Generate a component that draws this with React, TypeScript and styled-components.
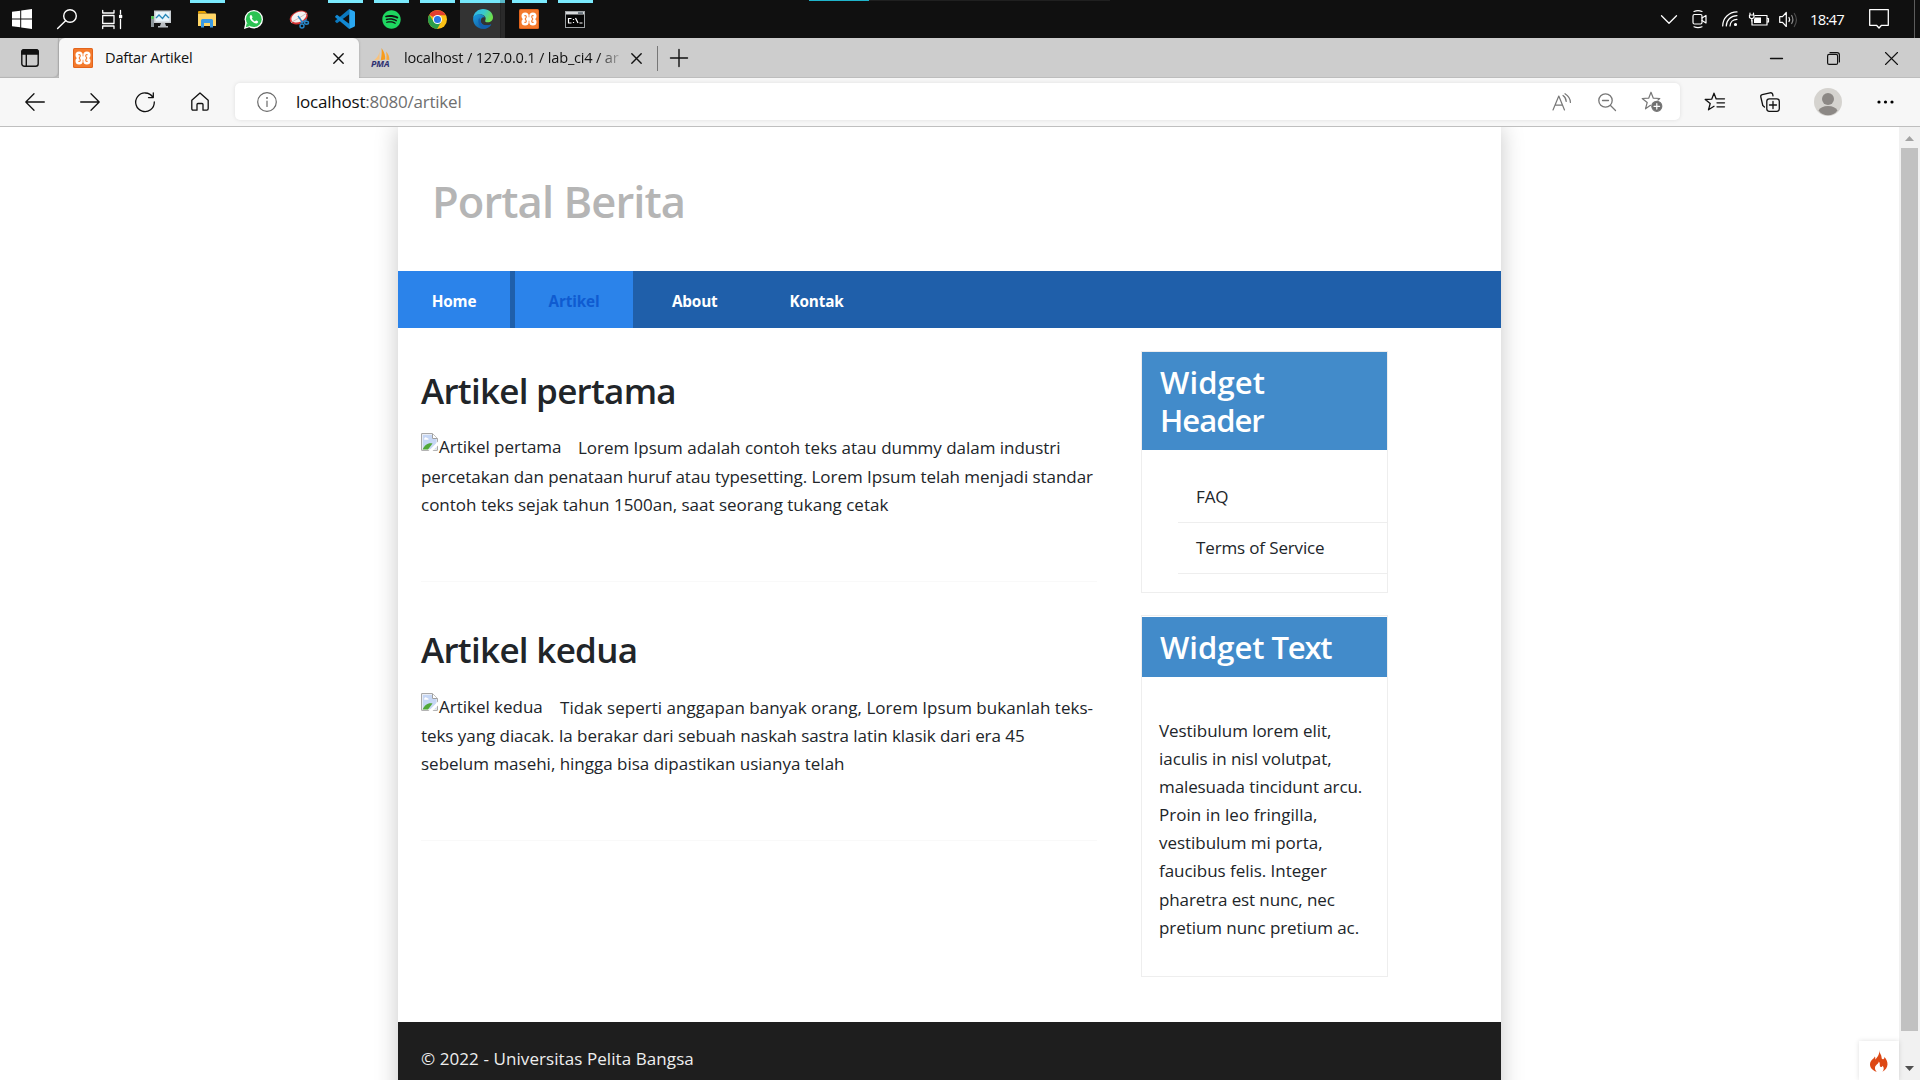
import React from "react";
import styled, { createGlobalStyle } from "styled-components";
import { FaSpotify } from "react-icons/fa";

const GlobalStyle = createGlobalStyle`
  * { box-sizing: border-box; }
  html, body { margin: 0; padding: 0; background: #fff; overflow: hidden; }
  body { font-family: "Open Sans", "Noto Sans", sans-serif; color: #212529; }
  svg { display: block; flex: none; overflow: visible; }
`;

const Screen = styled.div`
  width: 1920px;
  height: 1080px;
  display: flex;
  flex-direction: column;
  overflow: hidden;
`;

/* ---------- taskbar ---------- */
const Taskbar = styled.div`
  height: 38px;
  flex: none;
  background: #101010;
  display: flex;
  justify-content: space-between;
  position: relative;
`;
const TaskGroup = styled.div`
  display: flex;
  margin-left: -1px;
`;
const SystemButton = styled.div`
  width: 45px;
  display: flex;
  align-items: center;
  justify-content: center;
`;
const AppButtons = styled.div`
  display: flex;
  margin-left: 4px;
`;
const AppButton = styled.div<{ $state?: "running" | "active" }>`
  width: 46px;
  display: flex;
  align-items: center;
  justify-content: center;
  border-top: 3px solid transparent;
  padding-bottom: 3px;
  background: ${(p) =>
    p.$state === "active"
      ? "linear-gradient(90deg, #333 0 40px, #222 40px 41px, #2a2a2a 41px) no-repeat 0 0 / 45px 100%"
      : "none"};
  background-origin: border-box;
  border-image: ${(p) =>
    p.$state === "active"
      ? "linear-gradient(90deg, #76e8fb 0 40px, #58b8c8 40px 45px, transparent 45px) 3 0 0 0"
      : p.$state === "running"
      ? "linear-gradient(90deg, transparent 0 6px, #7beafd 6px 41px, transparent 41px) 3 0 0 0"
      : "none"};
`;
const Progress = styled.div`
  position: absolute;
  top: 0;
  left: 809px;
  width: 301px;
  height: 1px;
  background: linear-gradient(90deg, #1fb4cb 60px, #202020 60px);
`;
const Tray = styled.div`
  display: flex;
  align-items: center;
  color: #fff;
`;
const TrayItem = styled.div<{ $w: number }>`
  width: ${(p) => p.$w}px;
  display: flex;
  align-items: center;
  justify-content: center;
`;
const Clock = styled.div`
  width: 40px;
  margin-left: 2px;
  margin-right: 1px;
  font-size: 14.8px;
  letter-spacing: -0.7px;
  text-align: center;
  white-space: nowrap;
`;
const ShowDesktop = styled.div`
  width: 6px;
  height: 38px;
  margin-left: 5px;
  border-left: 1px solid #5c5c5c;
`;

/* ---------- tab strip ---------- */
const TabStrip = styled.div`
  height: 40px;
  flex: none;
  display: flex;
  background: #cdcdcd;
  justify-content: space-between;
  box-shadow: inset 0 -1px #bdbdbd;
`;
const Tabs = styled.div`
  display: flex;
`;
const TabActions = styled.div`
  width: 59px;
  display: flex;
  align-items: center;
  justify-content: center;
  border-radius: 0 0 5px 0;
  box-shadow: inset -1px -1px 1px #b5b5b5;
`;
const Tab = styled.div<{ $active?: boolean; $w: number }>`
  width: ${(p) => p.$w}px;
  height: 40px;
  display: flex;
  align-items: center;
  padding: 0 ${(p) => (p.$active ? 15 : 6)}px 0 ${(p) => (p.$active ? 14 : 12)}px;
  background: ${(p) => (p.$active ? "#f7f7f7" : "transparent")};
  border-radius: ${(p) => (p.$active ? "6px 6px 0 0" : "0 0 0 5px")};
  box-shadow: ${(p) => (p.$active ? "0 0 3px rgba(0,0,0,.2)" : "none")};
  font-size: 14.6px;
  color: #111;
`;
const TabTitle = styled.div<{ $ls: number; $fade?: boolean }>`
  flex: 1;
  margin: 0 9px 2px 12px;
  white-space: nowrap;
  letter-spacing: ${(p) => p.$ls}px;
  mask-image: ${(p) =>
    p.$fade ? "linear-gradient(90deg, #000 194px, transparent 220px)" : "none"};
`;
const TabDivider = styled.div`
  width: 1px;
  height: 25px;
  margin: 8px 12px 0 9px;
  background: #777;
`;
const StripIcon = styled.div`
  display: flex;
  align-items: center;
`;
const WindowButtons = styled.div`
  display: flex;
  align-items: center;
`;
const WindowButton = styled.div`
  width: 57.5px;
  display: flex;
  justify-content: center;
`;

/* ---------- toolbar ---------- */
const Toolbar = styled.div`
  height: 49px;
  flex: none;
  display: flex;
  align-items: center;
  background: #f7f7f7;
  border-bottom: 1px solid #bfbfbf;
  padding: 0 8px 1px 7.5px;
`;
const NavButton = styled.div`
  width: 55px;
  display: flex;
  justify-content: center;
`;
const AddressBar = styled.div`
  width: 1445px;
  height: 37px;
  margin-left: 7.5px;
  background: #fff;
  border-radius: 5px;
  box-shadow: 0 0 4px rgba(0, 0, 0, 0.1);
  display: flex;
  align-items: center;
  padding: 0 17px 0 22px;
`;
const Url = styled.div`
  flex: 1;
  margin-left: 19px;
  font-size: 17px;
  letter-spacing: -0.22px;
  color: #6f6f6f;
  white-space: nowrap;
  b { font-weight: 400; color: #101010; }
`;
const AddressIcons = styled.div`
  display: flex;
  align-items: center;
  gap: 25.5px;
`;
const ToolbarIcons = styled.div`
  flex: 1;
  display: flex;
  align-items: center;
  justify-content: space-between;
  padding: 0 18px 0 24px;
`;

/* ---------- viewport ---------- */
const Viewport = styled.div`
  flex: 1;
  min-height: 0;
  display: flex;
  overflow: hidden;
  position: relative;
`;
const PageArea = styled.div`
  flex: 1;
  display: flex;
  justify-content: center;
  overflow: hidden;
`;
const Container = styled.div`
  width: 1103px;
  height: 1100px;
  background: #fff;
  box-shadow: 0 0 22px rgba(0, 0, 0, 0.22);
  display: flex;
  flex-direction: column;
`;
const Header = styled.header`
  height: 144px;
  padding: 5px 0 0 34px;
`;
const SiteTitle = styled.h1`
  margin: 0;
  font-size: 43.5px;
  font-weight: 600;
  line-height: 140px;
  letter-spacing: -0.92px;
  color: #b5b5b5;
`;
const Nav = styled.nav`
  height: 57px;
  display: flex;
  gap: 5px;
  background: #1f5faa;
`;
const NavLink = styled.a<{ $w: number; $lit?: boolean; $current?: boolean }>`
  width: ${(p) => p.$w}px;
  display: flex;
  align-items: center;
  justify-content: center;
  padding-top: 2px;
  font-size: 15.3px;
  font-weight: 700;
  letter-spacing: -0.17px;
  background: ${(p) => (p.$lit ? "#2b83ea" : "transparent")};
  color: ${(p) => (p.$current ? "#0f5bd0" : "#fff")};
`;
const Wrapper = styled.div`
  height: 694px;
  display: flex;
  gap: 44px;
  padding-left: 23px;
`;
const Main = styled.main`
  width: 676px;
  padding-top: 42px;
`;
const Article = styled.article`
  height: 259.3px;
`;
const ArticleTitle = styled.h2<{ $ls: number }>`
  margin: 0 0 22.4px;
  font-size: 35px;
  line-height: 42px;
  font-weight: 600;
  white-space: nowrap;
  letter-spacing: ${(p) => p.$ls}px;
`;
const Body = styled.p`
  margin: 0;
  font-size: 17px;
  line-height: 28.16px;
`;
const Line = styled.span<{ $ls?: number }>`
  display: flex;
  white-space: nowrap;
  letter-spacing: ${(p) => p.$ls ?? 0}px;
`;
const Broken = styled.span<{ $w: number }>`
  width: ${(p) => p.$w}px;
  display: flex;
  margin-top: -1px;
  letter-spacing: -0.02px;
`;
const Divider = styled.hr`
  margin: 62px 0 0;
  border: 0;
  height: 1px;
  background: #f9f9f9;
`;
const Sidebar = styled.aside`
  width: 247px;
  padding-top: 23px;
`;
const Widget = styled.section<{ $h: number; $gap?: number }>`
  height: ${(p) => p.$h}px;
  border: 1px solid #eee;
  margin-bottom: 22px;
  padding-top: ${(p) => p.$gap ?? 0}px;
`;
const WidgetTitle = styled.h3`
  margin: 0;
  padding: 11px 18px;
  background: #428bca;
  color: #fff;
  font-size: 31px;
  line-height: 38px;
  font-weight: 600;
`;
const Word = styled.span<{ $ls: number }>`
  letter-spacing: ${(p) => p.$ls}px;
`;
const WidgetList = styled.ul`
  list-style: none;
  margin: 0;
  padding: 22px 0 18px 36px;
`;
const WidgetItem = styled.li`
  height: 51px;
  padding: 11.4px 18px;
  border-bottom: 1px solid #eee;
  font-size: 17px;
  line-height: 28.16px;
  letter-spacing: -0.14px;
`;
const WidgetText = styled.div`
  padding: 39.6px 0 0 17px;
`;
const Footer = styled.footer`
  flex: 1;
  background: #1e1e1e;
  color: #eee;
  padding: 22.5px 23px;
  font-size: 17px;
  line-height: 28.16px;
  letter-spacing: 0.08px;
`;
const Scrollbar = styled.div`
  width: 21px;
  background: #f1f1f1;
  display: flex;
  flex-direction: column;
  align-items: center;
  padding: 9px 0 9px;
`;
const Thumb = styled.div`
  width: 17px;
  height: 883px;
  margin: 7px 0 auto;
  background: #c1c1c1;
`;
const DebugBadge = styled.div`
  position: absolute;
  right: 21px;
  bottom: 0;
  width: 40px;
  height: 39px;
  background: #fff;
  box-shadow: 0 0 5px rgba(0, 0, 0, 0.13);
  display: flex;
  justify-content: center;
  padding-top: 9px;
`;

/* ---------- icons ---------- */
type StrokeProps = { w: number; h: number; c?: string; sw?: number; children: React.ReactNode };
const Stroke = ({ w, h, c = "#111", sw = 1.3, children }: StrokeProps) => (
  <svg width={w} height={h} viewBox={`0 0 ${w} ${h}`} fill="none" stroke={c} strokeWidth={sw} strokeLinecap="round" strokeLinejoin="round">
    {children}
  </svg>
);
const Xampp = () => (
  <svg width="20" height="20" viewBox="0 0 20 20">
    <rect width="20" height="20" rx="1.5" fill="#e2641c" />
    <rect x="1" y="1" width="18" height="18" rx="1" fill="#f47a2c" />
    <g fill="#fff">
      <circle cx="6.1" cy="7" r="3.6" /><circle cx="13.9" cy="7" r="3.6" />
      <circle cx="6.1" cy="13" r="3.6" /><circle cx="13.9" cy="13" r="3.6" />
      <rect x="4.8" y="8.2" width="10.4" height="3.6" />
    </g>
    <path d="M5.7 6.7Q7.6 6.4 7.2 8.2L6.2 10 7.2 11.8Q7.6 13.6 5.7 13.3M14.3 6.7Q12.4 6.4 12.8 8.2L13.8 10 12.8 11.8Q12.4 13.6 14.3 13.3" fill="none" stroke="#f47a2c" strokeWidth="1.1" strokeLinecap="round" />
  </svg>
);
const Close = () => (
  <Stroke w={11} h={11} sw={1.4}><path d="M.8 .8 10.2 10.2M10.2 .8 .8 10.2" /></Stroke>
);
const WindowsLogo = () => (
  <svg width="20" height="20" viewBox="0 0 20 20" fill="#fff">
    <path d="M0 2.8 8.2 1.7V9.5H0ZM9.2 1.5 20 0V9.5H9.2ZM0 10.5H8.2V18.3L0 17.2ZM9.2 10.5H20V20L9.2 18.5Z" />
  </svg>
);
const Monitor = () => (
  <svg width="20" height="18" viewBox="0 0 20 18">
    <rect x="3" y=".5" width="17" height="12.5" fill="#c9ced2" />
    <rect x="4.5" y="2" width="14" height="9.5" fill="#e9f4fa" />
    <path d="M5 8 8 5 11.5 8.5 14.5 4.5 18 8" fill="none" stroke="#2787b8" strokeWidth="1.3" />
    <path d="M10 13h4l1 3h2v1.5H7V16h2z" fill="#b9bec2" />
    <rect x="0" y="6" width="3" height="11" fill="#8e979c" /><rect x=".5" y="6" width="2" height="3" fill="#45d03f" />
  </svg>
);
const Folder = () => (
  <svg width="18" height="17" viewBox="0 0 18 17">
    <path d="M0 1Q0 0 1 0H7L9 2.5H0Z" fill="#e8a200" />
    <path d="M0 2.5H17Q18 2.5 18 3.5V15H0Z" fill="#ffd667" />
    <path d="M3 16.5V9.5Q3 8 4.5 8H13.5Q15 8 15 9.5V16.5H12V12H6V16.5Z" fill="#3b9be4" />
  </svg>
);
const Whatsapp = () => (
  <svg width="19" height="19" viewBox="0 0 19 19">
    <circle cx="9.8" cy="9.2" r="9.2" fill="#fff" /><path d="M0 19 1.5 12 6 17Z" fill="#fff" />
    <circle cx="9.8" cy="9.2" r="7.9" fill="#2bc353" /><path d="M1.8 17.2 2.8 13 6 16Z" fill="#2bc353" />
    <path d="M6.4 5.2C5 6.5 5.9 9.4 8.2 11.4 10.5 13.6 13 14 14 12.5 14.4 11.6 14 11.3 12.4 10.6 11.6 10.3 11.3 11.5 10.8 11.4 9.6 10.9 8.4 9.7 7.9 8.6 7.9 8.1 8.8 7.7 8.5 7 7.8 5.3 7.4 4.5 6.4 5.2Z" fill="#fff" />
  </svg>
);
const Snip = () => (
  <svg width="20" height="19" viewBox="0 0 20 19">
    <ellipse cx="9.8" cy="7.5" rx="9.5" ry="6.4" transform="rotate(-24 9.8 7.5)" fill="#d73434" />
    <ellipse cx="9.8" cy="7" rx="8" ry="4.9" transform="rotate(-24 9.8 7)" fill="#f4f1f1" />
    <path d="M2 12.5 10 8 18 3" stroke="#cdbcbc" fill="none" />
    <g fill="none" stroke="#2786c7" strokeWidth="1.4"><path d="M9 6 14 13M18 9.5 11.5 13" /><circle cx="13" cy="16" r="2" /><ellipse cx="17.5" cy="12.8" rx="2" ry="1.5" /></g>
  </svg>
);
const VsCode = () => (
  <svg width="20" height="20" viewBox="0 0 20 20">
    <path d="M14.2 5.2 2 14.3.2 12.8V11.8L14.2 0Z" fill="#0a78be" />
    <path d="M14.2 14.8 2 5.7.2 7.2V8.2L14.2 20Z" fill="#1289d3" />
    <path d="M14.2 0 19.2 2.3Q20 2.7 20 3.6V16.4Q20 17.3 19.2 17.7L14.2 20Z" fill="#2aa8f2" />
  </svg>
);
const Chrome = () => (
  <svg width="19" height="19" viewBox="0 0 20 20">
    <circle cx="10" cy="10" r="10" fill="#fbc116" />
    <path d="M10 10 1.34 5A10 10 0 0 1 18.66 5.5H10Z" fill="#e43e2f" />
    <path d="M1.34 5A10 10 0 0 0 9.6 20L14 12.3 10 10 6 12.3Z" fill="#2b9e4a" />
    <circle cx="10" cy="10" r="4.8" fill="#fff" /><circle cx="10" cy="10" r="3.7" fill="#2a76e6" />
  </svg>
);
const Edge = () => (
  <svg width="20" height="20" viewBox="0 0 20 20">
    <defs>
      <linearGradient id="edgeTop" x1="0" y1="0" x2="1" y2=".4"><stop offset="0" stopColor="#2fb3ea" /><stop offset=".55" stopColor="#38c8cf" /><stop offset="1" stopColor="#6ce04d" /></linearGradient>
      <linearGradient id="edgeLow" x1="0" y1="0" x2="1" y2="1"><stop offset="0" stopColor="#1b9de2" /><stop offset="1" stopColor="#114a8b" /></linearGradient>
    </defs>
    <path d="M.2 8.5C1 3.5 5 0 10 0 16 0 20 4 20 8.2 20 11.5 17.5 13.3 15 13.3 12.5 13.3 11.7 12.3 12.3 11.4 13.4 9.5 12.3 6.4 8.8 5.6 5 4.8 1.5 6.3.2 8.5Z" fill="url(#edgeTop)" />
    <path d="M.2 8.5C1.5 5.7 5 4.8 7.8 5.5 10.5 6.2 11.8 7.4 11.9 8.6 9.6 7.5 7.5 9.5 7.7 12.2 8 15.3 12.5 18 18.3 15.2 16.8 18 13.5 20 10 20 4.5 20-.8 15 .2 8.5Z" fill="url(#edgeLow)" />
    <path d="M6.2 8.8C4 12.5 6 18.5 11.5 19.8 14.5 19.5 17 17.5 18.3 15.2 12.5 18 8 15.3 7.7 12.2Z" fill="#1360ad" />
  </svg>
);
const Terminal = () => (
  <svg width="20" height="17" viewBox="0 0 20 17">
    <rect x=".5" y=".5" width="19" height="16" fill="#050505" stroke="#9fa3a5" />
    <rect x="1" y="1" width="18" height="2.5" fill="#d5d8da" /><rect x="13" y="1.4" width="5" height="1.3" fill="#3c4b58" />
    <path d="M6.5 7.5H3.5V12H6.5M8.5 8V9M8.5 11V12M10.5 7 13 12M14.5 12H17.5" stroke="#fff" strokeWidth="1.2" fill="none" />
  </svg>
);
const PmaText = styled.text`
  font: italic 700 8.8px "Open Sans", sans-serif;
`;
const Pma = () => (
  <svg width="21" height="20" viewBox="0 0 21 20">
    <path d="M8.5 1C8.8 6 6.5 10 2.5 12.5L8.5 11.5Z" fill="#f9c27b" />
    <path d="M10.5 0C13.5 4 14.5 8 14.2 11.6L9.8 12.2C10.6 8 11 4 10.5 0Z" fill="#f89c1c" />
    <path d="M15 3.5C17.5 6 18.5 9 18.3 12L15.3 11.8C15.7 9 15.6 6 15 3.5Z" fill="#f9a93b" />
    <PmaText x="0" y="19.3" fill="#2c2f70">PMA</PmaText>
  </svg>
);
const BrokenIcon = () => (
  <svg width="18" height="18" viewBox="0 0 18 18">
    <path d="M.6.6H11.5L16.4 5.5V17.3H.6Z" fill="#fff" stroke="#a0a0a0" />
    <path d="M1.7 1.7H11V6H15.5V16H1.7Z" fill="#c6d7f5" />
    <path d="M3.2 5.6Q4.5 3.2 6 5Q8 5 7.6 6.8H3.2Z" fill="#fff" />
    <path d="M1.7 16.5C3.5 12 7 9.5 11.5 10.5L7 16.5Z" fill="#51a838" />
    <path d="M7.5 18 17.5 8V12L11.5 18Z" fill="#fff" />
    <path d="M11.5.8V5.5H16.3" fill="#fff" stroke="#a0a0a0" />
  </svg>
);
const Flame = () => (
  <svg width="18" height="22" viewBox="0 0 18 22" fill="#dd4814">
    <path d="M9.3 0C9.2 3.2 11.8 5.2 11.6 7.6 11.5 8.8 12.6 9.6 13.6 9 14.6 8.4 14.4 7.5 14.2 6.8 18.6 11 19.2 18.4 12.4 21.8 14.2 19.6 14.2 17.2 12.4 15.7 12.2 16.8 11.3 17.3 10.4 16.7 9.2 15.8 10.6 13.6 8.8 11.6 8.9 13.8 5.4 15 5 17.6 4.8 19.4 5.6 20.8 6.7 21.8 1.8 20.2-.8 16.6.2 12.7 1.2 9.4 4 8.8 4.8 6.4 5.6 7.2 5.2 8.6 5.4 9.6 7.6 7 9.6 4.4 9.3 0Z" />
  </svg>
);

const apps: { icon: React.ReactNode; state?: "running" | "active" }[] = [
  { icon: <Monitor /> },
  { icon: <Folder />, state: "running" },
  { icon: <Whatsapp /> },
  { icon: <Snip /> },
  { icon: <VsCode />, state: "running" },
  { icon: <FaSpotify size={19} color="#1ed760" />, state: "running" },
  { icon: <Chrome />, state: "running" },
  { icon: <Edge />, state: "active" },
  { icon: <Xampp />, state: "running" },
  { icon: <Terminal />, state: "running" },
];

const widgetLines: [string, number][] = [
  ["Vestibulum lorem elit,", -0.06],
  ["iaculis in nisl volutpat,", -0.05],
  ["malesuada tincidunt arcu.", -0.1],
  ["Proin in leo fringilla,", 0.04],
  ["vestibulum mi porta,", -0.03],
  ["faucibus felis. Integer", -0.04],
  ["pharetra est nunc, nec", -0.11],
  ["pretium nunc pretium ac.", -0.06],
];

export default function App() {
  return (
    <Screen>
      <GlobalStyle />
      <Taskbar>
        <TaskGroup>
          <SystemButton><WindowsLogo /></SystemButton>
          <SystemButton>
            <Stroke w={20} h={20} c="#fff" sw={1.4}><circle cx="13" cy="7" r="6.3" /><path d="M8.6 11.8.6 19.6" /></Stroke>
          </SystemButton>
          <SystemButton>
            <Stroke w={20} h={19} c="#fff"><path d="M.7.5V3H12V.5M.7 18.5V16H12V18.5M.7 5.5H12V13.5H.7ZM18.5.5V4M18.5 9.5V18.5" /><rect x="17.6" y="5.5" width="2" height="2" fill="#fff" /></Stroke>
          </SystemButton>
          <AppButtons>
            {apps.map((app, i) => <AppButton key={i} $state={app.state}>{app.icon}</AppButton>)}
          </AppButtons>
        </TaskGroup>
        <Progress />
        <Tray>
          <TrayItem $w={31}><Stroke w={16} h={9} c="#fff"><path d="M.5.7 8 8.2 15.5.7" /></Stroke></TrayItem>
          <TrayItem $w={31}>
            <Stroke w={15} h={18} c="#fff" sw={1.2}><rect x="1" y="4.5" width="9" height="9.5" rx="1.5" /><path d="M10 8 14 5.5V13L10 10.5M2 1.5Q6 -.2 10 1.5M2 16.8Q6 18.4 10 16.8" /></Stroke>
          </TrayItem>
          <TrayItem $w={30}>
            <Stroke w={16} h={16} c="#fff" sw={1.2}><path d="M.7 15C.7 7 7 .9 15 .9M4.3 15C4.5 9 9 4.6 15 4.6M8 15C8.2 11 11 8.3 15 8.3" /><circle cx="13.5" cy="13.5" r="1" fill="#fff" /></Stroke>
          </TrayItem>
          <TrayItem $w={28}>
            <Stroke w={20} h={14} c="#fff" sw={1.2}><path d="M6 3.5H18V13H3V8.5M18 6.5H19.5V10H18" /><path d="M1 1V3M4.5 1V3M.5 3H5V5.5L3.5 6.5H2L.5 5.5Z M2.8 7V9" /><path d="M6 5.5H12V11H5V7Z" fill="#fff" stroke="none" /></Stroke>
          </TrayItem>
          <TrayItem $w={32}>
            <Stroke w={20} h={17} c="#fff" sw={1.2}><path d="M.7 5.7H3.5L7.3 1.5V15.5L3.5 11.3H.7Z" /><path d="M10 6.5Q11.2 8.5 10 10.5" /><path d="M12.7 4.5Q15 8.5 12.7 12.5" stroke="#8b8b8b" /><path d="M15.3 2.5Q19.5 8.5 15.3 15.5" stroke="#4d4d4d" /></Stroke>
          </TrayItem>
          <Clock>18:47</Clock>
          <TrayItem $w={61}>
            <Stroke w={20} h={20} c="#fff"><path d="M.7.7H19.3V16.3H12.5L10 19 7.5 16.3H.7Z" /></Stroke>
          </TrayItem>
          <ShowDesktop />
        </Tray>
      </Taskbar>

      <TabStrip>
        <Tabs>
          <TabActions>
            <Stroke w={18} h={18} sw={1.4}><rect x=".8" y=".8" width="16.4" height="16.4" rx="2.5" /><path d="M.8 5V3Q.8.8 3 .8H15Q17.2.8 17.2 3V5Z" fill="#111" /><path d="M5.3 5V17" /></Stroke>
          </TabActions>
          <Tab $active $w={300}>
            <Xampp />
            <TabTitle $ls={-0.2}>Daftar Artikel</TabTitle>
            <StripIcon><Close /></StripIcon>
          </Tab>
          <Tab $w={289}>
            <Pma />
            <TabTitle $ls={-0.2} $fade>localhost / 127.0.0.1 / lab_ci4 / ar</TabTitle>
            <StripIcon><Close /></StripIcon>
          </Tab>
          <TabDivider />
          <StripIcon><Stroke w={18} h={18} sw={1.4}><path d="M9 .5V17.5M.5 9H17.5" /></Stroke></StripIcon>
        </Tabs>
        <WindowButtons>
          <WindowButton><Stroke w={13} h={13}><path d="M.5 6.5H12.5" /></Stroke></WindowButton>
          <WindowButton><Stroke w={13} h={13} sw={1.2}><rect x=".6" y="2.4" width="10" height="10" rx="1.5" /><path d="M3 .6H10Q12.4.6 12.4 3V10" /></Stroke></WindowButton>
          <WindowButton><Stroke w={13} h={13} sw={1.1}><path d="M.5.5 12.5 12.5M12.5.5.5 12.5" /></Stroke></WindowButton>
        </WindowButtons>
      </TabStrip>

      <Toolbar>
        <NavButton><Stroke w={20} h={18}><path d="M19.3 9H1M9 .8.8 9 9 17.2" /></Stroke></NavButton>
        <NavButton><Stroke w={20} h={18}><path d="M.7 9H19M11 .8 19.2 9 11 17.2" /></Stroke></NavButton>
        <NavButton><Stroke w={20} h={20}><path d="M17.8 5.2A9.3 9.3 0 1 0 19.3 10M18.3.8V5.6H13.5" /></Stroke></NavButton>
        <NavButton><Stroke w={18} h={19}><path d="M.8 8.3 9 .9 17.2 8.3V16.5Q17.2 18.2 15.8 18.2H12V12.5Q12 11.5 11 11.5H7Q6 11.5 6 12.5V18.2H2.2Q.8 18.2 .8 16.5Z" /></Stroke></NavButton>
        <AddressBar>
          <Stroke w={20} h={20} c="#6a6a6a" sw={1.2}><circle cx="10" cy="10" r="9.3" /><path d="M10 9V14.5" /><circle cx="10" cy="6" r=".4" /></Stroke>
          <Url><b>localhost</b>:8080/artikel</Url>
          <AddressIcons>
            <Stroke w={20} h={18} c="#777" sw={1.2}><path d="M1 17 6.8 3 12.5 17M3 12.2H10.5M11 2.5Q14.2 4.8 14.2 8.5M13 .7Q18.4 4 18.4 9.5" /></Stroke>
            <Stroke w={18} h={18} c="#777" sw={1.3}><circle cx="7.5" cy="7.5" r="6.7" /><path d="M12.5 12.5 17.5 17.5M4.5 7.5H10.5" /></Stroke>
            <Stroke w={22} h={21} c="#777" sw={1.2}><path d="M9.5 14.3 4.5 17.8 6.2 11.5 1.2 7.5 7.7 7.2 10 1.2 12.3 7.2 18.8 7.5 17 9" /><circle cx="15.8" cy="15.3" r="5" fill="#707070" /><path d="M13 15.3H18.6M15.8 12.5V18.1" stroke="#fff" /></Stroke>
          </AddressIcons>
        </AddressBar>
        <ToolbarIcons>
          <Stroke w={21} h={19}><path d="M12 6.5 10 1.2 7.7 7.2 1.2 7.5 6.2 11.5 4.5 17.8 10 14.3M12 6.8H20.5M13 10.8H20.5M13 14.8H20.5" /></Stroke>
          <Stroke w={20} h={20}><rect x="6.8" y="6.8" width="12.5" height="12.5" rx="2.5" /><path d="M13 9.5V16.5M9.5 13H16.5M4.5 15 2.8 13.5.8 5Q.4 3.2 2.2 2.7L10 .8Q12 .4 12.6 2L13 3.8" /></Stroke>
          <svg width="28" height="28" viewBox="0 0 28 28">
            <circle cx="14" cy="14" r="14" fill="#d5d3cf" /><circle cx="14" cy="11" r="6" fill="#8c8885" />
            <path d="M4.5 22.5Q7 18 14 18T23.5 22.5Q20 27.3 14 27.3T4.5 22.5Z" fill="#8c8885" />
          </svg>
          <svg width="17" height="4" viewBox="0 0 17 4"><circle cx="2" cy="2" r="1.6" /><circle cx="8.5" cy="2" r="1.6" /><circle cx="15" cy="2" r="1.6" /></svg>
        </ToolbarIcons>
      </Toolbar>

      <Viewport>
        <PageArea>
          <Container>
            <Header><SiteTitle>Portal Berita</SiteTitle></Header>
            <Nav>
              <NavLink $w={112} $lit>Home</NavLink>
              <NavLink $w={118} $lit $current>Artikel</NavLink>
              <NavLink $w={113.5}>About</NavLink>
              <NavLink $w={120}>Kontak</NavLink>
            </Nav>
            <Wrapper>
              <Main>
                <Article>
                  <ArticleTitle $ls={-0.73}>Artikel pertama</ArticleTitle>
                  <Body>
                    <Line $ls={-0.03}><Broken $w={157}><BrokenIcon />Artikel pertama</Broken>Lorem Ipsum adalah contoh teks atau dummy dalam industri</Line>
                    <Line $ls={-0.05}>percetakan dan penataan huruf atau typesetting. Lorem Ipsum telah menjadi standar</Line>
                    <Line $ls={0}>contoh teks sejak tahun 1500an, saat seorang tukang cetak</Line>
                  </Body>
                  <Divider />
                </Article>
                <Article>
                  <ArticleTitle $ls={-0.7}>Artikel kedua</ArticleTitle>
                  <Body>
                    <Line $ls={0.03}><Broken $w={139}><BrokenIcon />Artikel kedua</Broken>Tidak seperti anggapan banyak orang, Lorem Ipsum bukanlah teks-</Line>
                    <Line $ls={-0.055}>teks yang diacak. Ia berakar dari sebuah naskah sastra latin klasik dari era 45</Line>
                    <Line $ls={-0.01}>sebelum masehi, hingga bisa dipastikan usianya telah</Line>
                  </Body>
                  <Divider />
                </Article>
              </Main>
              <Sidebar>
                <Widget $h={242}>
                  <WidgetTitle><Word $ls={0.1}>Widget</Word><br /><Word $ls={-1}>Header</Word></WidgetTitle>
                  <WidgetList>
                    <WidgetItem>FAQ</WidgetItem>
                    <WidgetItem>Terms of Service</WidgetItem>
                  </WidgetList>
                </Widget>
                <Widget $h={362} $gap={1}>
                  <WidgetTitle><Word $ls={0}>Widget</Word><Word $ls={-1.2}> Text</Word></WidgetTitle>
                  <WidgetText>
                    <Body>{widgetLines.map(([text, ls]) => <Line key={text} $ls={ls}>{text}</Line>)}</Body>
                  </WidgetText>
                </Widget>
              </Sidebar>
            </Wrapper>
            <Footer>© 2022 - Universitas Pelita Bangsa</Footer>
          </Container>
        </PageArea>
        <Scrollbar>
          <svg width="9" height="5" viewBox="0 0 9 5" fill="#a3a3a3"><path d="M0 5 4.5 0 9 5Z" /></svg>
          <Thumb />
          <svg width="9" height="5" viewBox="0 0 9 5" fill="#505050"><path d="M0 0H9L4.5 5Z" /></svg>
        </Scrollbar>
        <DebugBadge><Flame /></DebugBadge>
      </Viewport>
    </Screen>
  );
}
